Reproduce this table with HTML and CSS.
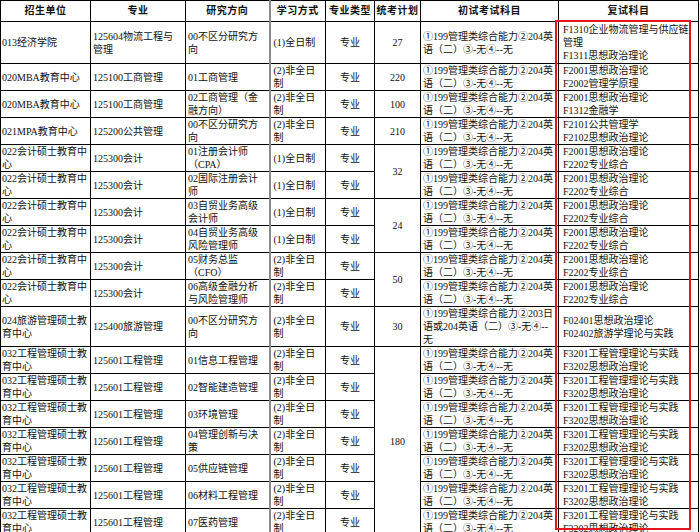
FILE: index.html
```html
<!DOCTYPE html>
<html lang="zh">
<head>
<meta charset="utf-8">
<title>招生计划</title>
<link rel="stylesheet" href="styles.css">
</head>
<body>
<div class="sheet">
<table class="plan">
<colgroup>
<col class="w-unit"><col class="w-major"><col class="w-dir"><col class="w-mode"><col class="w-type"><col class="w-num"><col class="w-exam"><col class="w-retest">
</colgroup>
<thead>
<tr><th>招生单位</th><th>专业</th><th>研究方向</th><th class="mode">学习方式</th><th>专业类型</th><th>统考计划</th><th>初试考试科目</th><th>复试科目</th></tr>
</thead>
<tbody>
<tr class="tall"><td class="unit">013经济学院</td><td>125604物流工程与管理</td><td>00不区分研究方向</td><td class="mode">(1)全日制</td><td class="c">专业</td><td class="c">27</td><td class="exam">①199管理类综合能力②204英语（二）③-无④--无</td><td class="retest">F1310企业物流管理与供应链管理<br>F1311思想政治理论</td></tr>
<tr><td class="unit">020MBA教育中心</td><td>125100工商管理</td><td>01工商管理</td><td class="mode">(2)非全日制</td><td class="c">专业</td><td class="c">220</td><td class="exam">①199管理类综合能力②204英语（二）③-无④--无</td><td class="retest">F2001思想政治理论<br>F2002管理学原理</td></tr>
<tr><td class="unit">020MBA教育中心</td><td>125100工商管理</td><td>02工商管理（金融方向）</td><td class="mode">(2)非全日制</td><td class="c">专业</td><td class="c">100</td><td class="exam">①199管理类综合能力②204英语（二）③-无④--无</td><td class="retest">F2001思想政治理论<br>F1312金融学</td></tr>
<tr><td class="unit">021MPA教育中心</td><td>125200公共管理</td><td>00不区分研究方向</td><td class="mode">(2)非全日制</td><td class="c">专业</td><td class="c">210</td><td class="exam">①199管理类综合能力②204英语（二）③-无④--无</td><td class="retest">F2101公共管理学<br>F2102思想政治理论</td></tr>
<tr><td class="unit">022会计硕士教育中心</td><td>125300会计</td><td>01注册会计师（CPA）</td><td class="mode">(1)全日制</td><td class="c">专业</td><td class="c" rowspan="2">32</td><td class="exam">①199管理类综合能力②204英语（二）③-无④--无</td><td class="retest">F2001思想政治理论<br>F2202专业综合</td></tr>
<tr><td class="unit">022会计硕士教育中心</td><td>125300会计</td><td>02国际注册会计师</td><td class="mode">(1)全日制</td><td class="c">专业</td><td class="exam">①199管理类综合能力②204英语（二）③-无④--无</td><td class="retest">F2001思想政治理论<br>F2202专业综合</td></tr>
<tr><td class="unit">022会计硕士教育中心</td><td>125300会计</td><td>03自贸业务高级会计师</td><td class="mode">(1)全日制</td><td class="c">专业</td><td class="c" rowspan="2">24</td><td class="exam">①199管理类综合能力②204英语（二）③-无④--无</td><td class="retest">F2001思想政治理论<br>F2202专业综合</td></tr>
<tr><td class="unit">022会计硕士教育中心</td><td>125300会计</td><td>04自贸业务高级风险管理师</td><td class="mode">(1)全日制</td><td class="c">专业</td><td class="exam">①199管理类综合能力②204英语（二）③-无④--无</td><td class="retest">F2001思想政治理论<br>F2202专业综合</td></tr>
<tr><td class="unit">022会计硕士教育中心</td><td>125300会计</td><td>05财务总监（CFO）</td><td class="mode">(2)非全日制</td><td class="c">专业</td><td class="c" rowspan="2">50</td><td class="exam">①199管理类综合能力②204英语（二）③-无④--无</td><td class="retest">F2001思想政治理论<br>F2202专业综合</td></tr>
<tr><td class="unit">022会计硕士教育中心</td><td>125300会计</td><td>06高级金融分析与风险管理师</td><td class="mode">(2)非全日制</td><td class="c">专业</td><td class="exam">①199管理类综合能力②204英语（二）③-无④--无</td><td class="retest">F2001思想政治理论<br>F2202专业综合</td></tr>
<tr><td class="unit">024旅游管理硕士教育中心</td><td>125400旅游管理</td><td>00不区分研究方向</td><td class="mode">(2)非全日制</td><td class="c">专业</td><td class="c">30</td><td class="exam">①199管理类综合能力②203日语或204英语（二）③-无④--无</td><td class="retest">F02401思想政治理论<br>F02402旅游学理论与实践</td></tr>
<tr><td class="unit">032工程管理硕士教育中心</td><td>125601工程管理</td><td>01信息工程管理</td><td class="mode">(2)非全日制</td><td class="c">专业</td><td class="c" rowspan="7">180</td><td class="exam">①199管理类综合能力②204英语（二）③-无④--无</td><td class="retest">F3201工程管理理论与实践<br>F3202思想政治理论</td></tr>
<tr><td class="unit">032工程管理硕士教育中心</td><td>125601工程管理</td><td>02智能建造管理</td><td class="mode">(2)非全日制</td><td class="c">专业</td><td class="exam">①199管理类综合能力②204英语（二）③-无④--无</td><td class="retest">F3201工程管理理论与实践<br>F3202思想政治理论</td></tr>
<tr><td class="unit">032工程管理硕士教育中心</td><td>125601工程管理</td><td>03环境管理</td><td class="mode">(2)非全日制</td><td class="c">专业</td><td class="exam">①199管理类综合能力②204英语（二）③-无④--无</td><td class="retest">F3201工程管理理论与实践<br>F3202思想政治理论</td></tr>
<tr><td class="unit">032工程管理硕士教育中心</td><td>125601工程管理</td><td>04管理创新与决策</td><td class="mode">(2)非全日制</td><td class="c">专业</td><td class="exam">①199管理类综合能力②204英语（二）③-无④--无</td><td class="retest">F3201工程管理理论与实践<br>F3202思想政治理论</td></tr>
<tr><td class="unit">032工程管理硕士教育中心</td><td>125601工程管理</td><td>05供应链管理</td><td class="mode">(2)非全日制</td><td class="c">专业</td><td class="exam">①199管理类综合能力②204英语（二）③-无④--无</td><td class="retest">F3201工程管理理论与实践<br>F3202思想政治理论</td></tr>
<tr><td class="unit">032工程管理硕士教育中心</td><td>125601工程管理</td><td>06材料工程管理</td><td class="mode">(2)非全日制</td><td class="c">专业</td><td class="exam">①199管理类综合能力②204英语（二）③-无④--无</td><td class="retest">F3201工程管理理论与实践<br>F3202思想政治理论</td></tr>
<tr><td class="unit">032工程管理硕士教育中心</td><td>125601工程管理</td><td>07医药管理</td><td class="mode">(2)非全日制</td><td class="c">专业</td><td class="exam">①199管理类综合能力②204英语（二）③-无④--无</td><td class="retest">F3201工程管理理论与实践<br>F3202思想政治理论</td></tr>
</tbody>
</table>
<div class="highlight"></div>
</div>
</body>
</html>
```
FILE: styles.css
```css
html, body {
  margin: 0;
  padding: 0;
  background: #fff;
}
body {
  width: 700px;
  height: 532px;
  overflow: hidden;
}
.sheet {
  position: relative;
  width: 700px;
}
.plan {
  border-collapse: collapse;
  table-layout: fixed;
  width: 698px;
  font-family: "Liberation Serif", "Noto Sans CJK SC", serif;
  font-size: 10px;
  line-height: 13px;
  color: #111;
}
.w-unit { width: 90px; }
.w-major { width: 95px; }
.w-dir { width: 84px; }
.w-mode { width: 56px; }
.w-type { width: 49px; }
.w-num { width: 46px; }
.w-exam { width: 138px; }
.w-retest { width: 140px; }
.plan th, .plan td {
  border: 1px solid #000;
  padding: 0 3px 0 2px;
  vertical-align: middle;
  text-align: left;
  word-break: normal;
}
.plan th {
  font-weight: bold;
  text-align: center;
  padding: 3px 1px 4px;
  letter-spacing: 0.5px;
}
.plan td.unit {
  padding: 0 2px 0 1px;
}
.plan .mode {
  border-left: 2px solid #8a8a8a;
}
.plan td.mode {
  padding-left: 3px;
}
.plan td.c {
  text-align: center;
  padding: 0 1px;
}
.plan td.exam {
  padding: 0 3px 0 2px;
}
.plan td.retest {
  padding: 0 4px 0 4px;
}
.plan tr.tall td {
  height: 41px;
}
.highlight {
  position: absolute;
  left: 555px;
  top: 20px;
  width: 132px;
  height: 506px;
  border: 2px solid #e3161c;
  pointer-events: none;
}
```
